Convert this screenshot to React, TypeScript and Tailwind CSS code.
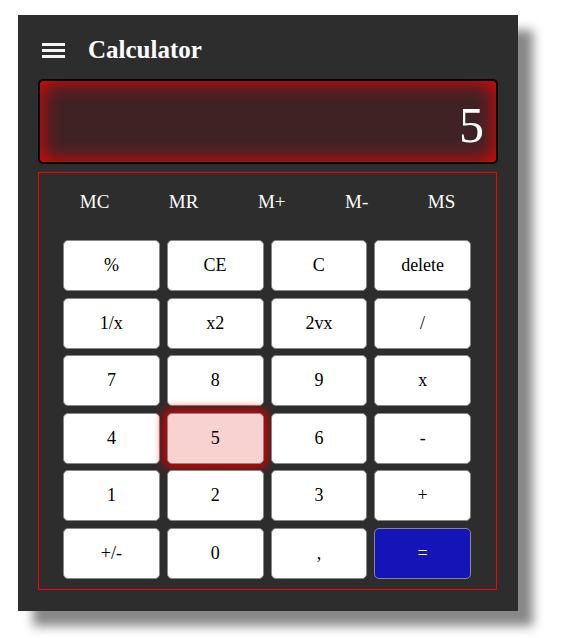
const memory = ["MC", "MR", "M+", "M-", "MS"];

const keys = [
  "%", "CE", "C", "delete",
  "1/x", "x2", "2vx", "/",
  "7", "8", "9", "x",
  "4", "5", "6", "-",
  "1", "2", "3", "+",
  "+/-", "0", ",", "=",
];

const App = () => {
  return (
    <div className="min-h-screen bg-white pt-[15px] pl-[18px] font-serif">
      <div className="w-[500px] h-[596px] bg-[#2d2d2d] shadow-[15px_15px_10px_#888] px-5 pt-[15px] flex flex-col font-['Liberation_Serif',serif]">
        <div className="h-[40px] mb-[9px] flex items-center">
          <div className="ml-[4px] w-[23px] flex flex-col gap-[3px]">
            <span className="block h-[3px] bg-[#f4f4f4]"></span>
            <span className="block h-[3px] bg-[#f4f4f4]"></span>
            <span className="block h-[3px] bg-[#f4f4f4]"></span>
          </div>
          <h1 className="ml-[23px] text-[25px] font-bold text-white">Calculator</h1>
        </div>

        <div className="h-[85px] border-2 border-black rounded-[5px] bg-[#402224] shadow-[inset_0_0_20px_#ff0000] flex items-center justify-end pr-[12px] pt-[6px] text-[50px] leading-none text-white">
          5
        </div>

        <div className="mt-[8px] mr-[1px] border border-[#ff0000] flex flex-col pb-[10px]">
          <div className="h-[58px] flex items-center justify-around px-[11px]">
            {memory.map(m => (
              <button key={m} className="text-[19px] text-white cursor-pointer">{m}</button>
            ))}
          </div>
          <div className="mt-[9px] pl-[24px] pr-[25px] grid grid-cols-4 gap-x-[7px] gap-y-[6.6px]">
            {keys.map(k => {
              let style = "bg-white text-black";
              if (k === "5") style = "bg-[#f8d1d1] text-black shadow-[0_0_10px_4px_#d00000]";
              if (k === "=") style = "bg-[#1414b8] text-white";
              return (
                <button
                  key={k}
                  className={`h-[51px] rounded-[5px] border border-[#888] text-[18px] cursor-pointer ${style}`}
                >
                  {k}
                </button>
              );
            })}
          </div>
        </div>
      </div>
    </div>
  );
};

export default App;
